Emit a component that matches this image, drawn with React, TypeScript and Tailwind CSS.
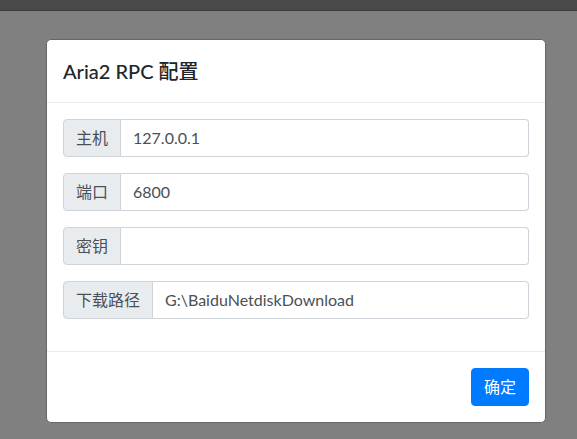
import React from "react";

const font = { fontFamily: '"Segoe UI", Lato, "Noto Sans CJK SC", sans-serif' };

function Group({ label, value }: { label: string; value: string }) {
  return (
    <div className="flex h-[38px] w-full">
      <div className="flex items-center px-3 bg-[#e9ecef] border border-[#ced4da] rounded-l-[4px] text-[#495057] text-[16px] whitespace-nowrap">
        {label}
      </div>
      <div className="flex-1 flex items-center px-3 bg-white border border-l-0 border-[#ced4da] rounded-r-[4px] text-[#495057] text-[16px]">
        {value}
      </div>
    </div>
  );
}

export default function App() {
  return (
    <div className="w-[577px] h-[439px] bg-[#808080] overflow-hidden" style={font}>
      <div className="h-[11px] bg-[#4a4a4a] border-b border-[#3a3a3a]" />
      <div className="pt-[28px] pl-[46px]">
        <div className="w-[500px] bg-white border border-[#666] rounded-[5px] flex flex-col">
          <div className="px-4 h-[63px] flex items-center border-b border-[#e9ecef]">
            <h5 className="text-[20px] leading-[30px] text-[#212529] font-medium">Aria2 RPC 配置</h5>
          </div>
          <div className="pt-4 px-4 pb-8 flex flex-col gap-4">
            <Group label="主机" value="127.0.0.1" />
            <Group label="端口" value="6800" />
            <Group label="密钥" value="" />
            <Group label="下载路径" value="G:\BaiduNetdiskDownload" />
          </div>
          <div className="border-t border-[#e9ecef] px-4 py-4 flex justify-end">
            <button className="h-[38px] px-3 bg-[#007bff] border border-[#007bff] text-white text-[16px] rounded-[4px]">确定</button>
          </div>
        </div>
      </div>
    </div>
  );
}
